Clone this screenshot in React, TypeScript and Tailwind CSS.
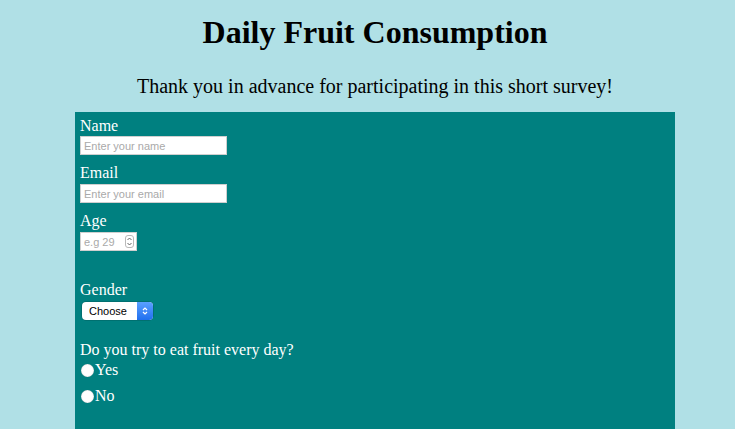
import React from "react";

export default function App() {
  return (
    <div className="min-h-[429px] w-full bg-[#b0e0e6] pl-[15px] text-black" style={{ fontFamily: '"Liberation Serif", "Times New Roman", serif' }}>
      <h1 className="pt-[14px] text-center text-[32px] font-bold leading-[37px]">Daily Fruit Consumption</h1>
      <p className="mt-[24px] text-center text-[20px] leading-[23px]">Thank you in advance for participating in this short survey!</p>
      <form className="mx-auto mt-[14px] h-[320px] w-[600px] bg-[#008080] pl-[5px] pt-[5px] text-white">
        <div className="text-[16px] leading-[18px]">Name</div>
        <input
          type="text"
          placeholder="Enter your name"
          className="mt-[1px] block h-[19px] w-[147px] border border-[#cfcfcf] bg-white px-[3px] text-[11px] text-black placeholder:text-[#a9a9a9] outline-none"
          style={{ fontFamily: '"Liberation Sans", Arial, sans-serif' }}
        />
        <div className="mt-[9px] text-[16px] leading-[18px]">Email</div>
        <input
          type="text"
          placeholder="Enter your email"
          className="mt-[2px] block h-[19px] w-[147px] border border-[#cfcfcf] bg-white px-[3px] text-[11px] text-black placeholder:text-[#a9a9a9] outline-none"
          style={{ fontFamily: '"Liberation Sans", Arial, sans-serif' }}
        />
        <div className="mt-[9px] text-[16px] leading-[18px]">Age</div>
        <div className="relative mt-[2px] h-[19px] w-[57px]">
          <input
            type="text"
            placeholder="e.g 29"
            className="block h-[19px] w-[57px] border border-[#cfcfcf] bg-white pl-[3px] pr-[16px] text-[11px] text-black placeholder:text-[#a9a9a9] outline-none"
            style={{ fontFamily: '"Liberation Sans", Arial, sans-serif' }}
          />
          <div className="absolute right-[3px] top-[3px] flex h-[13px] w-[9px] flex-col items-center justify-center rounded-[3px] border border-[#b9b9b9] bg-white">
            <svg width="7" height="11" viewBox="0 0 7 11">
              <path d="M1.5 4 L3.5 2 L5.5 4" fill="none" stroke="#555" strokeWidth="0.9" />
              <path d="M1.5 7 L3.5 9 L5.5 7" fill="none" stroke="#555" strokeWidth="0.9" />
            </svg>
          </div>
        </div>
        <div className="mt-[30px] text-[16px] leading-[18px]">Gender</div>
        <div
          className="relative ml-[2px] mt-[3px] flex h-[18px] w-[71px] items-center rounded-[4px] bg-white text-[11px] text-black shadow-[0_0_0_0.5px_rgba(0,0,0,0.25)]"
          style={{ fontFamily: '"Liberation Sans", Arial, sans-serif' }}
        >
          <span className="pl-[7px]">Choose</span>
          <div className="absolute right-0 top-0 flex h-[18px] w-[16px] items-center justify-center rounded-r-[4px] bg-gradient-to-b from-[#5aa0ff] to-[#1f6fef]">
            <svg width="8" height="12" viewBox="0 0 8 12">
              <path d="M2 5 L4 3 L6 5" fill="none" stroke="#fff" strokeWidth="1.2" />
              <path d="M2 7 L4 9 L6 7" fill="none" stroke="#fff" strokeWidth="1.2" />
            </svg>
          </div>
        </div>
        <div className="mt-[21px] text-[16px] leading-[18px]">Do you try to eat fruit every day?</div>
        <label className="mt-[2px] flex h-[18px] items-center text-[16px] leading-[18px]">
          <span className="ml-[1px] mr-[1px] inline-block h-[13px] w-[13px] rounded-full bg-white shadow-[inset_0_0_1px_rgba(0,0,0,0.4)]" />
          Yes
        </label>
        <label className="mt-[8px] flex h-[18px] items-center text-[16px] leading-[18px]">
          <span className="ml-[1px] mr-[1px] inline-block h-[13px] w-[13px] rounded-full bg-white shadow-[inset_0_0_1px_rgba(0,0,0,0.4)]" />
          No
        </label>
      </form>
    </div>
  );
}
